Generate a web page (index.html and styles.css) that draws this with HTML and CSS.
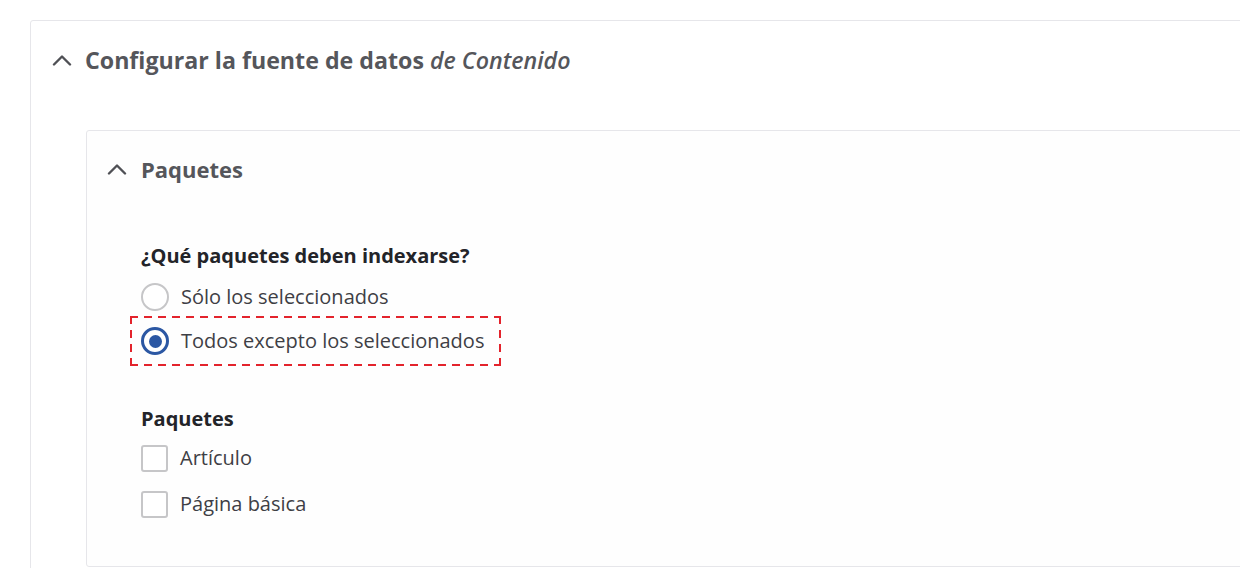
FILE: index.html
```html
<!DOCTYPE html>
<html lang="es">
<head>
<meta charset="utf-8">
<title>Configurar la fuente de datos</title>
<link rel="stylesheet" href="styles.css">
</head>
<body>
<div class="viewport">
  <section class="panel">
    <div class="panel-summary">
      <svg class="chevron" viewBox="0 0 20 12" width="20" height="12"><path d="M2 10.5 L10 2.5 L18 10.5" fill="none" stroke="#4f5055" stroke-width="2.4" stroke-linecap="round" stroke-linejoin="round"/></svg>
      <span class="panel-title">Configurar la fuente de datos <em>de Contenido</em></span>
    </div>
    <div class="panel-body">
      <section class="subpanel">
        <div class="subpanel-summary">
          <svg class="chevron" viewBox="0 0 20 12" width="20" height="12"><path d="M2 10.5 L10 2.5 L18 10.5" fill="none" stroke="#4f5055" stroke-width="2.4" stroke-linecap="round" stroke-linejoin="round"/></svg>
          <span class="subpanel-title">Paquetes</span>
        </div>
        <div class="subpanel-body">
          <fieldset class="field">
            <div class="field-label field-label-first">¿Qué paquetes deben indexarse?</div>
            <label class="option">
              <span class="radio"></span>
              <span class="option-text">Sólo los seleccionados</span>
            </label>
            <label class="option option-highlight">
              <span class="radio radio-checked"></span>
              <span class="option-text">Todos excepto los seleccionados</span>
            </label>
          </fieldset>
          <fieldset class="field field-checks">
            <div class="field-label">Paquetes</div>
            <label class="option">
              <span class="checkbox"></span>
              <span class="option-text">Artículo</span>
            </label>
            <label class="option">
              <span class="checkbox"></span>
              <span class="option-text">Página básica</span>
            </label>
          </fieldset>
        </div>
      </section>
    </div>
  </section>
</div>
</body>
</html>
```
FILE: styles.css
```css
* { box-sizing: border-box; }
html, body { margin: 0; padding: 0; background: #ffffff; }
body {
  font-family: "Open Sans", "Noto Sans", "Liberation Sans", sans-serif;
  color: #55565b;
}
.viewport {
  width: 1240px;
  height: 568px;
  overflow: hidden;
  padding: 20px 0 0 30px;
}
.panel {
  width: 1300px;
  border: 1px solid #e6e6ea;
  border-radius: 3px;
  background: #fff;
  min-height: 700px;
}
.panel-summary {
  display: flex;
  align-items: center;
  height: 80px;
  padding: 0 0 2px 21px;
}
.chevron { flex: none; display: block; }
.panel-title {
  margin-left: 13px;
  font-size: 23.2px;
  line-height: 30px;
  font-weight: 700;
  color: #55565b;
}
.panel-title em { font-weight: 600; }
.panel-body { padding: 29px 0 0 55px; }
.subpanel {
  border: 1px solid #e6e6ea;
  border-radius: 3px;
  background: #fefefe;
  height: 437px;
}
.subpanel-summary {
  display: flex;
  align-items: center;
  height: 76px;
  padding: 0 0 0 20px;
}
.subpanel-title {
  margin-left: 14px;
  font-size: 22px;
  line-height: 30px;
  font-weight: 700;
  color: #55565b;
}
.subpanel-body { padding: 35px 0 0 54px; }
.field {
  border: 0;
  margin: 0;
  padding: 0;
  display: flex;
  flex-direction: column;
  align-items: flex-start;
}
.field-checks { margin-top: 39px; }
.field-label {
  font-size: 20px;
  font-weight: 700;
  color: #232429;
  line-height: 28px;
  margin-bottom: 2px;
}
.field-label-first { margin-bottom: 4px; }
.option {
  display: flex;
  align-items: center;
  gap: 12px;
  height: 46px;
  font-size: 20px;
  line-height: 28px;
  color: #3e3f45;
}
.option-highlight {
  margin-left: -11px;
  margin-top: -4px;
  padding: 0 17px 0 11px;
  height: 50px;
  background:
    repeating-linear-gradient(90deg, #e3232c 0 8px, transparent 8px 14px) left top / 100% 2px no-repeat,
    repeating-linear-gradient(90deg, #e3232c 0 8px, transparent 8px 14px) left bottom / 100% 2px no-repeat,
    repeating-linear-gradient(180deg, #e3232c 0 8px, transparent 8px 14px) left top / 2px 100% no-repeat,
    repeating-linear-gradient(180deg, #e3232c 0 8px, transparent 8px 14px) right top / 2px 100% no-repeat;
}
.radio {
  width: 28px;
  height: 28px;
  border-radius: 50%;
  border: 2px solid #c6c6c8;
  background: #fff;
  flex: none;
}
.radio-checked {
  border: 3px solid #2b57a3;
  display: flex;
  align-items: center;
  justify-content: center;
}
.radio-checked::after {
  content: "";
  width: 13px;
  height: 13px;
  border-radius: 50%;
  background: #2b57a3;
}
.checkbox {
  width: 27px;
  height: 27px;
  border-radius: 3px;
  border: 2px solid #c6c6c8;
  background: #fff;
  flex: none;
}
```
